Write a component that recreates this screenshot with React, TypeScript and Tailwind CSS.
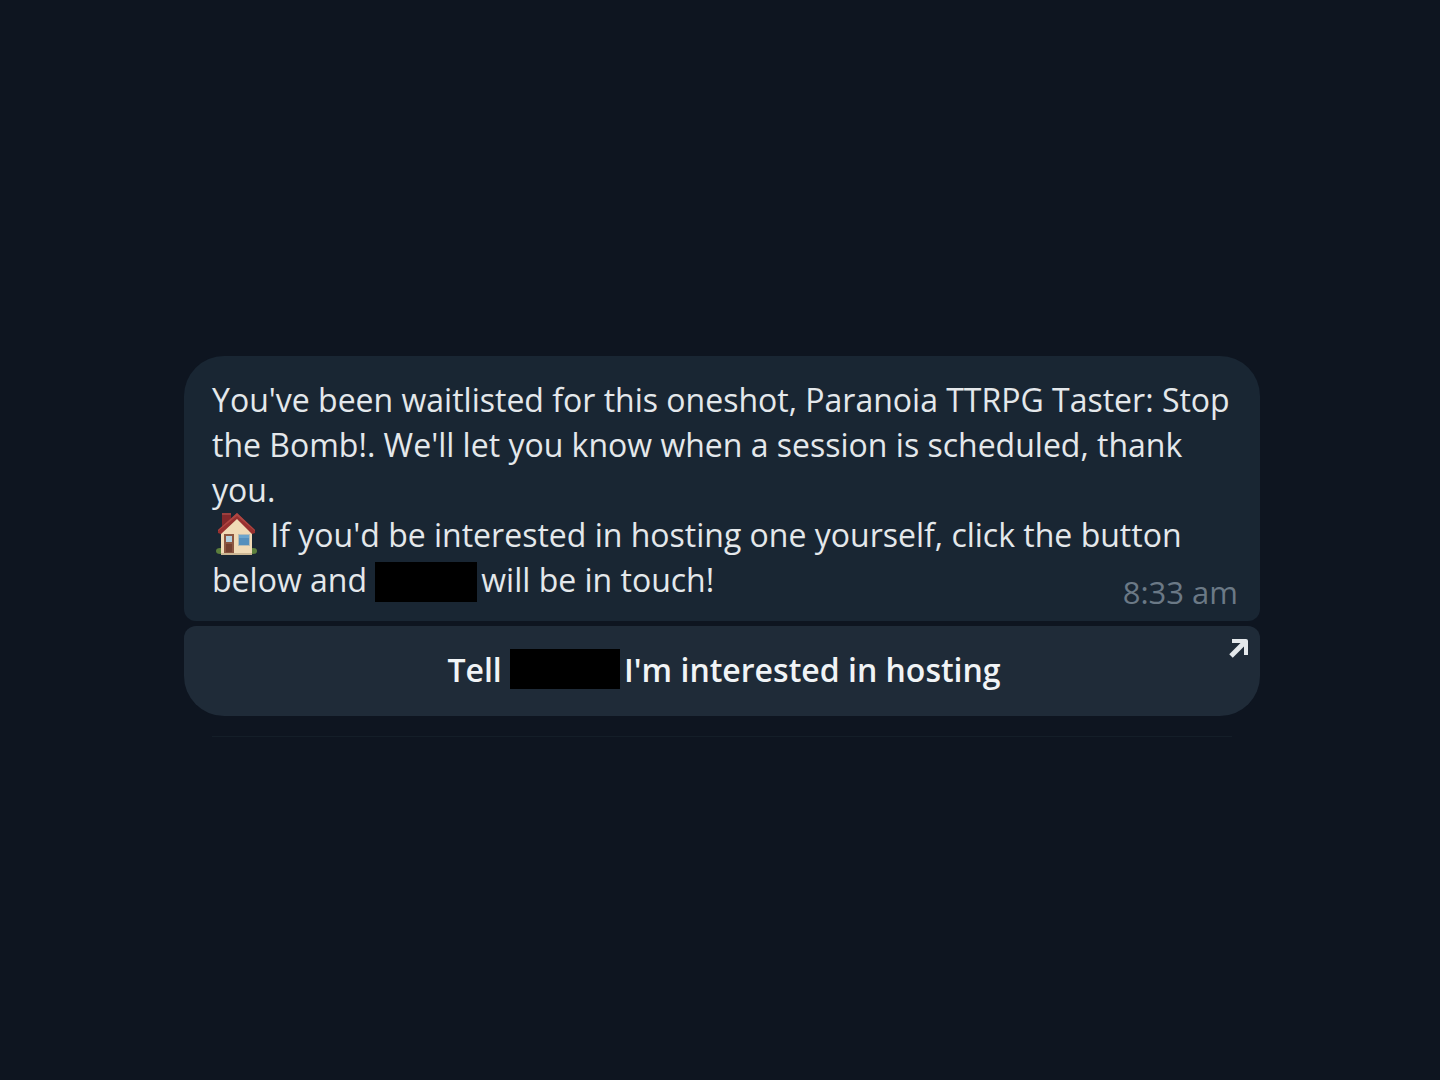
import type { ReactNode } from 'react'

interface MessageBubbleProps {
  children: ReactNode
}

function HouseIcon() {
  return (
    <svg className="-mt-2 mr-1 ml-0.5 inline-block h-11 w-11 align-middle" viewBox="0 0 44 44" role="img" aria-label="House">
      {/* grass */}
      <ellipse cx="6" cy="39" rx="4" ry="3" fill="#5c7f3c" />
      <ellipse cx="39" cy="39" rx="4" ry="3" fill="#5c7f3c" />
      {/* chimney */}
      <path d="M8 1h9v8l-9 8z" fill="#83282b" />
      <path d="M8 1h9v2H8z" fill="#9c3f3e" />
      {/* walls */}
      <path d="M23 5L7 20v22h31V20z" fill="#f0dab6" />
      <path d="M7 41h31v2H7z" fill="#cdb794" />
      {/* roof */}
      <path d="M23 1L4 18v3l3 1L23 7l15 15 3-1v-3z" fill="#98302f" />
      <path d="M23 1L4 18v1L23 4l18 15v-1z" fill="#ae4642" />
      {/* door */}
      <path d="M10 22h10v19H10z" fill="#8b5641" />
      <path d="M12 24h6v6h-6z" fill="#b4d0de" />
      <path d="M12 32h6v8h-6z" fill="#744030" />
      {/* window */}
      <path d="M24 22h12v12H24z" fill="#b9bdb5" />
      <path d="M25 23h10v10H25z" fill="#5590bd" />
      <path d="M25 23h10v3H25z" fill="#6ba5cd" />
    </svg>
  )
}

function ExternalArrow() {
  return (
    <svg className="absolute top-3 right-[11px] h-5 w-5" viewBox="0 0 20 20" fill="none" stroke="#e4e8eb" aria-hidden="true">
      <path d="M3 3h14v14" strokeWidth="4" strokeLinejoin="round" />
      <path d="M16 4L2 18" strokeWidth="5" />
    </svg>
  )
}

function MessageBubble({ children }: MessageBubbleProps) {
  return (
    <article className="rounded-t-[40px] rounded-b-xl bg-[#192633] px-7 pt-[21px] pb-[19px] text-[32px] leading-[45px] text-[#e4e8eb]">
      {children}
    </article>
  )
}

export default function App() {
  return (
    <main className="flex min-h-screen items-center justify-center bg-[#0e1520] pt-[13px] pr-4 pl-5 font-['Open_Sans',sans-serif]">
      <div className="w-full max-w-[1076px]">
        <MessageBubble>
          <p>
            You've been waitlisted for this oneshot, Paranoia TTRPG Taster: Stop the Bomb!. We'll let you know when a
            session is scheduled, thank you.
          </p>
          <p>
            <HouseIcon /> If you'd be interested in hosting one yourself, click the button below and{' '}
            <span className="-mt-0.5 mr-1 inline-block h-10 w-[102px] bg-black align-middle" />
            will be in touch!
            <time className="float-right mt-[13px] -mr-1.5 text-[31px] text-[#6b7986]">8:33 am</time>
          </p>
        </MessageBubble>

        <button
          type="button"
          className="relative mt-[5px] flex min-h-[90px] w-full items-center justify-center rounded-t-xl rounded-b-[40px] bg-[#1f2b38] pr-12 pb-1 pl-[52px] text-[32px] leading-[45px] font-semibold text-[#f1f4f6]"
        >
          <span>
            Tell <span className="-mt-2 mr-1 inline-block h-10 w-[110px] bg-black align-middle" />
            I'm interested in hosting
          </span>
          <ExternalArrow />
        </button>

        <hr className="mx-7 mt-5 border-[#141e28]" />
      </div>
    </main>
  )
}
